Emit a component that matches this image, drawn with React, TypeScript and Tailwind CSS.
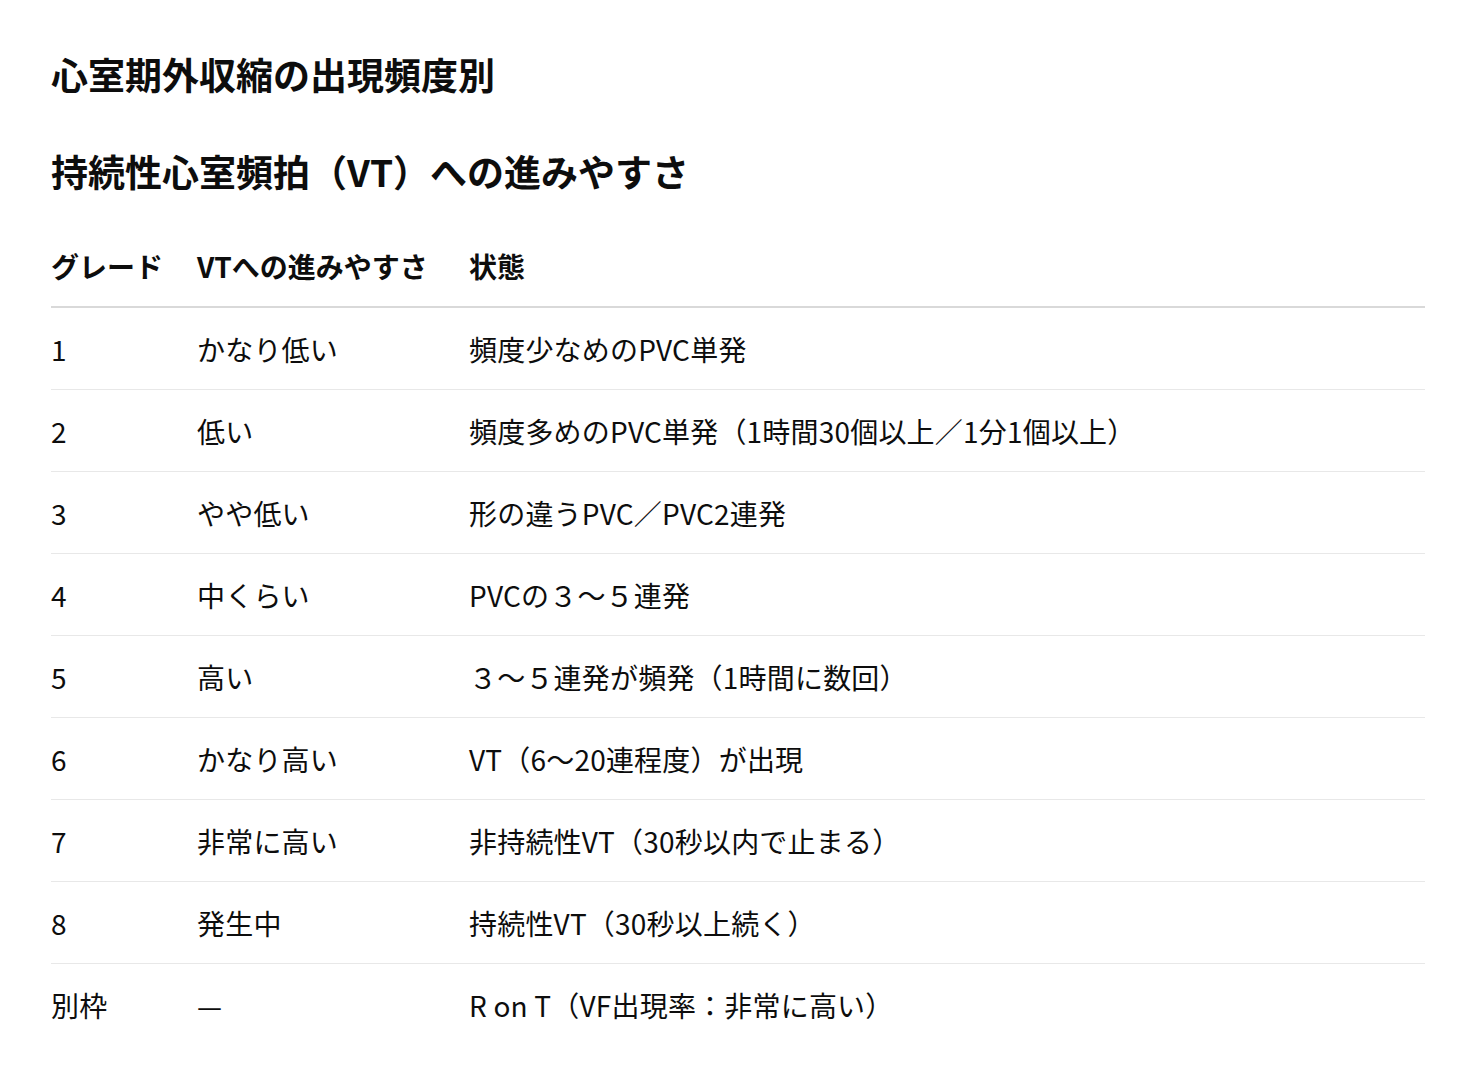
const rows: [string, string, string][] = [
  ["1", "かなり低い", "頻度少なめのPVC単発"],
  ["2", "低い", "頻度多めのPVC単発（1時間30個以上／1分1個以上）"],
  ["3", "やや低い", "形の違うPVC／PVC2連発"],
  ["4", "中くらい", "PVCの３〜５連発"],
  ["5", "高い", "３〜５連発が頻発（1時間に数回）"],
  ["6", "かなり高い", "VT（6〜20連程度）が出現"],
  ["7", "非常に高い", "非持続性VT（30秒以内で止まる）"],
  ["8", "発生中", "持続性VT（30秒以上続く）"],
  ["別枠", "—", "R on T（VF出現率：非常に高い）"],
];

export default function App() {
  return (
    <div
      className="min-h-screen bg-white px-[51px] pt-[48px] text-[#0d0d0d]"
      style={{ fontFamily: '"Noto Sans CJK JP", "Noto Sans", sans-serif' }}
    >
      <h2 className="text-[37px] font-bold leading-[52px]">心室期外収縮の出現頻度別</h2>
      <h2 className="mt-[45px] text-[37px] font-bold leading-[52px]">持続性心室頻拍（VT）への進みやすさ</h2>

      <div className="mt-[29px] w-[1374px]">
        <div className="grid h-[82px] grid-cols-[146px_272px_1fr] items-center border-b-2 border-[#d9d9d9] text-[28px] font-bold">
          <div>グレード</div>
          <div>VTへの進みやすさ</div>
          <div>状態</div>
        </div>
        {rows.map(([grade, risk, state], i) => (
          <div
            key={grade}
            className={
              "grid h-[82px] grid-cols-[146px_272px_1fr] items-center text-[28px] tracking-[0.2px] " +
              (i < rows.length - 1 ? "border-b border-[#e8e8e8]" : "")
            }
          >
            <div>{grade}</div>
            <div>{risk}</div>
            <div>{state}</div>
          </div>
        ))}
      </div>
    </div>
  );
}
